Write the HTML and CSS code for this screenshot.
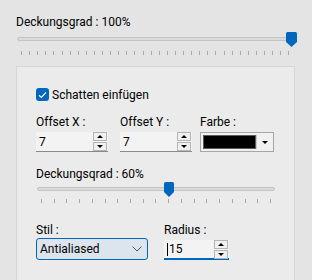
FILE: index.html
```html
<!DOCTYPE html>
<html>
<head>
<meta charset="utf-8">
<link rel="stylesheet" href="styles.css">
</head>
<body>
<div class="top">
  <div class="label">Deckungsgrad : 100%</div>
  <div class="slider slider-top">
    <div class="track"></div>
    <svg class="thumb" style="left:270px" width="11" height="15" viewBox="0 0 11 15"><path d="M1.5 0 H9.5 Q11 0 11 1.5 V10 L5.5 15 L0 10 V1.5 Q0 0 1.5 0 Z" fill="#0067c0"/></svg>
    <div class="ticks ticks-top"></div>
  </div>
</div>
<div class="panel">
  <label class="check">
    <span class="box"><svg width="9" height="8" viewBox="0 0 9 8"><path d="M1 4.2 L3.4 6.4 L8 1.4" fill="none" stroke="#fff" stroke-width="1.2"/></svg></span>
    <span>Schatten einfügen</span>
  </label>
  <div class="row fields">
    <div class="field">
      <div class="label">Offset X :</div>
      <div class="spin w72"><span class="val">7</span><span class="btns"><span class="b up"></span><span class="b down"></span></span></div>
    </div>
    <div class="field">
      <div class="label">Offset Y :</div>
      <div class="spin w72"><span class="val">7</span><span class="btns"><span class="b up"></span><span class="b down"></span></span></div>
    </div>
    <div class="field">
      <div class="label">Farbe :</div>
      <div class="color"><span class="swatch"></span><span class="drop"><span class="tri"></span></span></div>
    </div>
  </div>
  <div class="label op2">Deckungsqrad : 60%</div>
  <div class="slider slider-2">
    <div class="track"></div>
    <svg class="thumb" style="left:128px" width="10" height="15" viewBox="0 0 10 15"><path d="M1.5 0 H8.5 Q10 0 10 1.5 V10 L5 15 L0 10 V1.5 Q0 0 1.5 0 Z" fill="#0067c0"/></svg>
    <div class="ticks ticks-2"></div>
  </div>
  <div class="row fields2">
    <div class="field">
      <div class="label">Stil :</div>
      <div class="combo"><span>Antialiased</span><svg width="10" height="6" viewBox="0 0 10 6"><path d="M0.5 0.5 L5 5 L9.5 0.5" fill="none" stroke="#555" stroke-width="1"/></svg></div>
    </div>
    <div class="field">
      <div class="label">Radius :</div>
      <div class="spin active w66"><span class="val"><span class="caret"></span>15</span><span class="btns"><span class="b up"></span><span class="b down"></span></span></div>
    </div>
  </div>
</div>
</body>
</html>
```
FILE: styles.css
```css
* { box-sizing: border-box; }
html, body { margin: 0; padding: 0; }
body {
  width: 312px;
  height: 280px;
  overflow: hidden;
  background: #e4e4e4;
  font-family: Roboto, "Noto Sans", sans-serif;
  font-size: 12px;
  color: #000;
}
.label { line-height: 16px; height: 16px; white-space: nowrap; }
.top { padding: 14px 0 0 16px; }
.slider { position: relative; }
.track {
  height: 4px;
  background: #dadada;
  border: 1px solid #c4c4c4;
  border-radius: 2px;
}
.thumb { position: absolute; top: 0; display: block; }
.slider-top { width: 281px; padding-top: 5px; height: 30px; margin-top: 2px; }
.slider-top .track { margin-left: 1px; width: 276px; }
.ticks { height: 4px; }
.ticks-top {
  margin-top: 10px;
  margin-left: 5px;
  width: 272px;
  background-image: repeating-linear-gradient(to right, #a8a8a8 0 1px, transparent 1px 8.1px);
}
.panel {
  margin: 4px 17px 0 16px;
  height: 220px;
  background: #ebebeb;
  border: 1px solid #d6d6d6;
  border-bottom: none;
  padding: 20px 0 0 19px;
}
.check { display: flex; align-items: center; gap: 3px; height: 15px; }
.box {
  width: 13px; height: 13px;
  background: #0067c0;
  border-radius: 3px;
  display: flex; align-items: center; justify-content: center;
}
.row { display: flex; }
.fields { margin-top: 12px; gap: 12px; }
.fields .field:nth-child(2) { margin-right: -4px; }
.field .label { margin-bottom: 2px; }
.spin {
  height: 20px;
  background: #f3f3f3;
  border-bottom: 1px solid #8a8a8a;
  display: flex; align-items: center; justify-content: space-between;
  padding: 0 1px 0 3px;
}
.w72 { width: 72px; }
.w66 { width: 65px; }
.val { display: flex; align-items: center; }
.btns { display: flex; flex-direction: column; gap: 1px; }
.b {
  width: 14px; height: 9px;
  border: 1px solid #b4b4b4;
  background: #f0f0f0;
  position: relative;
}
.b::after {
  content: "";
  position: absolute; left: 3px;
  border-left: 3.5px solid transparent; border-right: 3.5px solid transparent;
}
.up::after { top: 2px; border-bottom: 3px solid #000; }
.down::after { top: 2px; border-top: 3px solid #000; }
.color {
  width: 74px; height: 20px;
  border: 1px solid #a6a6a6;
  background: #f0f0f0;
  display: flex; padding: 2px;
}
.swatch { width: 53px; height: 14px; background: #000; border: 1px solid #5a5a5a; }
.drop { flex: 1; position: relative; border-left: 1px solid #c8c8c8; }
.tri {
  position: absolute; left: 5px; top: 6px;
  border-left: 3px solid transparent; border-right: 3px solid transparent;
  border-top: 3px solid #000;
}
.op2 { margin-top: 14px; }
.slider-2 { width: 240px; padding-top: 5px; height: 40px; margin-top: 0; }
.slider-2 .track { width: 238px; margin-left: 1px; }
.ticks-2 {
  margin-top: 8px;
  margin-left: 5px;
  width: 232px;
  background-image: repeating-linear-gradient(to right, #a8a8a8 0 1px, transparent 1px 12.72px);
}
.fields2 { margin-top: 0; gap: 16px; }
.fields2 .label { margin-bottom: 0; }
.combo {
  width: 112px; height: 22px;
  background: #dce4ee;
  border: 1px solid #0067c0;
  border-radius: 3px;
  display: flex; align-items: center; justify-content: space-between;
  padding: 0 5px 0 3px;
}
.active { border-bottom: 2px solid #0067c0; margin-top: 2px; height: 20px; }
.caret { width: 1px; height: 13px; background: #000; margin-right: 1px; }
```
